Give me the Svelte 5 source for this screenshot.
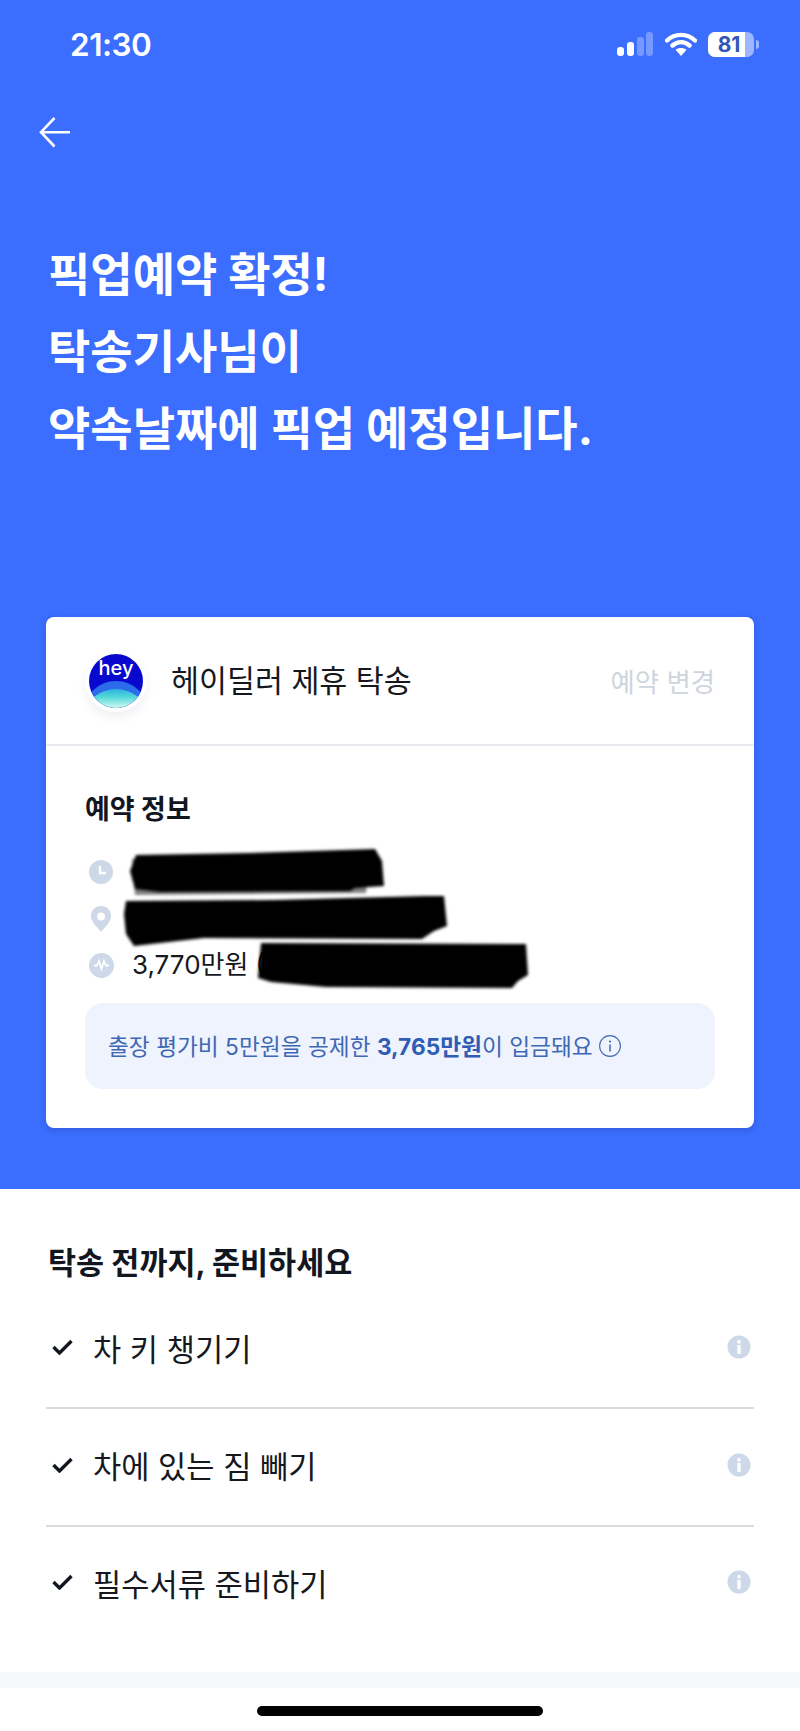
<script>
  const checklist = ["차 키 챙기기", "차에 있는 짐 빼기", "필수서류 준비하기"];
</script>

<div class="page">
  <section class="hero">
    <div class="status">
      <span class="time">21:30</span>
      <div class="status-icons">
        <svg class="signal" width="36" height="24" viewBox="0 0 36 24">
          <rect x="0" y="15" width="7" height="9" rx="3" fill="#fff" />
          <rect x="10" y="10" width="7" height="14" rx="3" fill="#fff" />
          <rect x="20" y="5" width="7" height="19" rx="3" fill="#fff" opacity="0.3" />
          <rect x="29" y="0" width="7" height="24" rx="3" fill="#fff" opacity="0.3" />
        </svg>
        <svg class="wifi" width="32" height="24" viewBox="0 0 32 24">
          <path d="M2 8.5C10 1 22 1 30 8.5M7.5 13.5C12.5 9 19.5 9 24.5 13.5" fill="none" stroke="#fff" stroke-width="4.4" stroke-linecap="round" />
          <path d="M16 24L10.5 17.8C13.5 15.4 18.5 15.4 21.5 17.8Z" fill="#fff" />
        </svg>
        <div class="battery">
          <div class="battery-body">
            <div class="battery-fill"></div>
            <span class="battery-num">81</span>
          </div>
          <div class="battery-nub"></div>
        </div>
      </div>
    </div>

    <div class="nav">
      <svg width="32" height="32" viewBox="0 0 32 32">
        <path d="M15.5 2L2 16.2L15.5 30.5M2 16.2H31" fill="none" stroke="#fff" stroke-width="2.6" />
      </svg>
    </div>

    <h1>픽업예약 확정!<br />탁송기사님이<br />약속날짜에 픽업 예정입니다.</h1>

    <div class="card">
      <div class="card-head">
        <div class="logo">
          <svg width="54" height="54" viewBox="0 0 54 54">
            <defs>
              <linearGradient id="glow" x1="0" y1="0" x2="0" y2="1">
                <stop offset="0" stop-color="#2fb0e0" />
                <stop offset="0.15" stop-color="#4fd6d8" />
                <stop offset="0.36" stop-color="#c4f8ee" />
              </linearGradient>
              <clipPath id="disc"><circle cx="27" cy="27" r="27" /></clipPath>
            </defs>
            <g clip-path="url(#disc)">
              <rect width="54" height="54" fill="#0808cf" />
              <ellipse cx="27" cy="58" rx="32" ry="31" fill="#2b6cea" />
              <ellipse cx="27" cy="60" rx="30" ry="25" fill="url(#glow)" />
            </g>
            <text x="27" y="21" text-anchor="middle" class="logo-text">hey</text>
          </svg>
        </div>
        <span class="partner">헤이딜러 제휴 탁송</span>
        <span class="change">예약 변경</span>
      </div>

      <div class="card-body">
        <h2>예약 정보</h2>
        <div class="rows">
          <div class="row">
            <svg class="row-icon" width="24" height="24" viewBox="0 0 24 24">
              <circle cx="12" cy="12" r="12" fill="#cdd8e8" />
              <path d="M11 6V13H17" fill="none" stroke="#fff" stroke-width="2.4" />
            </svg>
            <svg class="blob blob-a" viewBox="0 0 254 45" preserveAspectRatio="none">
              <path d="M2 10L240 6L236 44L5 46Z" fill="#000" opacity="0.5" />
              <path d="M6 6L120 4L245 0L252 12L254 37L225 39L220 42L30 43L5 40L0 22Z" fill="#000" />
            </svg>
          </div>
          <div class="row">
            <svg class="row-icon pin" width="22" height="26" viewBox="0 0 22 26">
              <path fill-rule="evenodd" d="M11 0C17 0 21 4.500 21 10C21 16 15 21 11 26C7 21 1 16 1 10C1 4.500 5 0 11 0ZM11 6.500A4 4 0 1 0 11 14.500A4 4 0 1 0 11 6.500Z" fill="#cdd8e8" />
            </svg>
            <svg class="blob blob-b" viewBox="0 0 324 52" preserveAspectRatio="none">
              <path d="M2 7L150 6L300 2L320 2L323 32L310 37L298 45L80 44L10 52L2 40L0 20Z" fill="#000" />
            </svg>
          </div>
          <div class="row">
            <svg class="row-icon" width="25" height="25" viewBox="0 0 25 25">
              <circle cx="12.500" cy="12.500" r="12.500" fill="#cdd8e8" />
              <path d="M5 12.500H8L10 8L12.500 16L15 8L17 12.500H20" fill="none" stroke="#fff" stroke-width="1.800" />
            </svg>
            <span class="amount">3,770만원</span>
            <span class="amount paren">(</span>
            <svg class="blob blob-c" viewBox="0 0 272 45" preserveAspectRatio="none">
              <path d="M5 0L270 1L272 32L262 38L256 45L70 44L15 39L2 35Z" fill="#000" />
            </svg>
          </div>
        </div>

        <div class="notice">
          <span>출장 평가비 5만원을 공제한 <b>3,765만원</b>이 입금돼요</span>
          <svg width="22" height="22" viewBox="0 0 22 22">
            <circle cx="11" cy="11" r="10.400" fill="none" stroke="#3f68b4" stroke-width="1.1" />
            <circle cx="11" cy="6.500" r="1.100" fill="#3f68b4" />
            <path d="M11 9.500V16.500" stroke="#3f68b4" stroke-width="1.500" />
          </svg>
        </div>
      </div>
    </div>
  </section>

  <section class="prep">
    <h3>탁송 전까지, 준비하세요</h3>
    <ul>
      {#each checklist as item}
        <li>
          <svg class="check" width="21" height="16" viewBox="0 0 21 16">
            <path d="M1.500 8L7.500 14L19.500 2" fill="none" stroke="#12161f" stroke-width="3.400" />
          </svg>
          <span class="item-text">{item}</span>
          <svg class="info" width="24" height="24" viewBox="0 0 24 24">
            <circle cx="12" cy="12" r="11.500" fill="#cdd8e8" />
            <rect x="10.300" y="5" width="3.400" height="3.400" rx="1" fill="#fff" />
            <rect x="10.300" y="10" width="3.400" height="9" fill="#fff" />
          </svg>
        </li>
      {/each}
    </ul>
  </section>

  <div class="band"></div>
  <div class="home"><div class="home-bar"></div></div>
</div>

<style>
  :global(body) {
    margin: 0;
    background: #fff;
  }

  .page {
    width: 800px;
    height: 1731px;
    overflow: hidden;
    display: flex;
    flex-direction: column;
    font-family: Inter, "Noto Sans CJK KR", sans-serif;
    color: #12161f;
  }

  .hero {
    background: #3b6dff;
    height: 1189px;
    padding: 0 46px;
    box-sizing: border-box;
    display: flex;
    flex-direction: column;
  }

  .status {
    height: 88px;
    display: flex;
    align-items: center;
    justify-content: space-between;
    color: #fff;
  }

  .time {
    margin-left: 24px;
    font-size: 31.500px;
    font-weight: 600;
    letter-spacing: -0.5px;
  }

  .status-icons {
    display: flex;
    align-items: center;
    margin-right: -5px;
  }

  .wifi {
    margin-left: 12px;
  }

  .battery {
    margin-left: 11px;
    display: flex;
    align-items: center;
  }

  .battery-body {
    position: relative;
    width: 46px;
    height: 25px;
    border-radius: 7px;
    background: rgba(255, 255, 255, 0.5);
    overflow: hidden;
    text-align: center;
  }

  .battery-fill {
    position: absolute;
    inset: 0 9px 0 0;
    background: #fff;
  }

  .battery-num {
    position: relative;
    font-size: 21px;
    line-height: 25px;
    font-weight: 700;
    color: #2f56b8;
    display: block;
    margin-right: 4px;
  }

  .battery-nub {
    width: 3px;
    height: 9px;
    margin-left: 2px;
    border-radius: 0 3px 3px 0;
    background: rgba(255, 255, 255, 0.5);
  }

  .nav {
    height: 60px;
    display: flex;
    align-items: flex-start;
    margin-left: -7px;
    margin-top: 28px;
  }

  h1 {
    margin: 60px 0 0 2px;
    font-size: 46px;
    line-height: 77px;
    font-weight: 700;
    color: #fff;
  }

  .card {
    margin-top: 150px;
    height: 511px;
    background: #fff;
    border-radius: 8px;
    box-shadow: 0 2px 6px rgba(20, 40, 110, 0.25);
    display: flex;
    flex-direction: column;
  }

  .card-head {
    height: 129px;
    box-sizing: border-box;
    padding: 0 39px 0 43px;
    border-bottom: 2px solid #e8ebf0;
    display: flex;
    align-items: center;
  }

  .logo {
    width: 54px;
    height: 54px;
    border-radius: 50%;
    box-shadow: 0 0 0 4px #fff, 0 6px 14px rgba(30, 40, 80, 0.12);
    display: flex;
  }

  .logo-text {
    font-family: Inter, sans-serif;
    font-size: 20px;
    font-weight: 500;
    fill: #fff;
  }

  .partner {
    margin: 0 0 4px 28px;
    font-size: 30.400px;
    flex: 1;
    color: #16181d;
  }

  .change {
    font-size: 26.400px;
    color: #cfd5dd;
  }

  .card-body {
    padding: 46px 39px 0;
  }

  h2 {
    margin: 0;
    font-size: 27px;
    line-height: 36px;
    font-weight: 700;
  }

  .rows {
    margin-top: 21px;
    display: flex;
    flex-direction: column;
  }

  .row {
    position: relative;
    height: 46.500px;
    display: flex;
    align-items: center;
  }

  .row-icon {
    flex: none;
    margin-left: 4px;
  }

  .row-icon.pin {
    margin-left: 5px;
    margin-right: 1px;
  }

  .amount {
    margin: 0 0 6px 18px;
    font-size: 26px;
    color: #16181d;
  }

  .paren {
    margin-left: 7px;
  }

  .blob {
    position: absolute;
    filter: blur(1.500px);
    overflow: visible;
  }

  .blob-a {
    left: 45px;
    top: 0;
    width: 254px;
    height: 45px;
  }

  .blob-b {
    left: 39px;
    top: -2px;
    width: 324px;
    height: 52px;
  }

  .blob-c {
    left: 171px;
    top: 1px;
    width: 272px;
    height: 45px;
  }

  .notice {
    margin-top: 14px;
    height: 86px;
    border-radius: 18px;
    background: #eef3fd;
    padding: 0 23px;
    display: flex;
    align-items: center;
    gap: 6px;
    font-size: 22.700px;
    color: #3f68b4;
  }

  .notice b {
    font-weight: 700;
    color: #2f5cb5;
  }

  .prep {
    padding: 0 46px;
    flex: 1;
  }

  h3 {
    margin: 52px 0 0 2px;
    font-size: 30.500px;
    line-height: 44px;
    font-weight: 700;
  }

  ul {
    list-style: none;
    margin: 0;
    padding: 0;
  }

  li {
    height: 117.500px;
    display: flex;
    align-items: center;
    box-sizing: border-box;
    border-bottom: 2px solid #d9dbdf;
    padding: 0 3px 4px 6px;
  }

  li:first-child {
    margin-top: 6.500px;
  }

  li:last-child {
    border-bottom: 0;
    padding-bottom: 6px;
  }

  .item-text {
    flex: 1;
    margin-left: 20px;
    font-size: 30.700px;
    color: #16181d;
  }

  .band {
    height: 16px;
    background: #f6f8fc;
  }

  .home {
    height: 43px;
    box-sizing: border-box;
    padding-top: 18px;
    display: flex;
    justify-content: center;
  }

  .home-bar {
    width: 286px;
    height: 10px;
    border-radius: 5px;
    background: #000;
  }
</style>
